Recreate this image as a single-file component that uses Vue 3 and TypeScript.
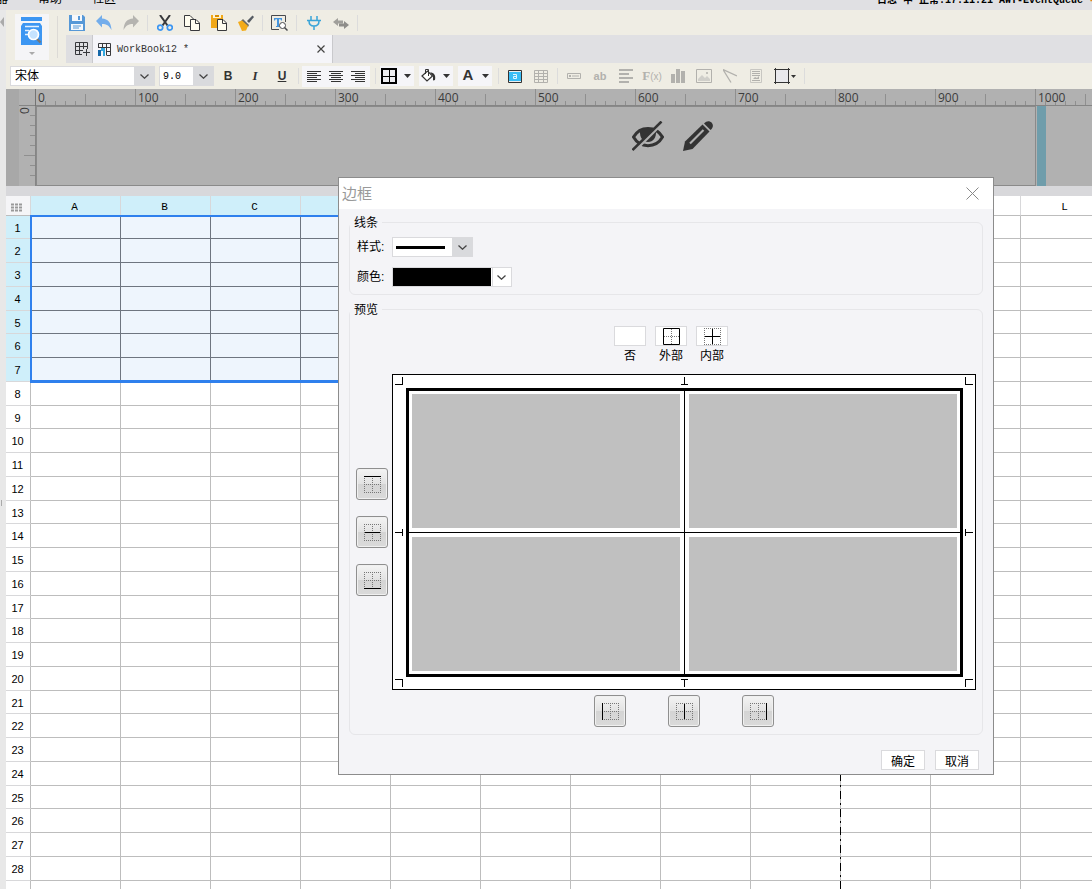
<script setup lang="ts">
const rulerTicks = Array.from({ length: 140 }, (_, i) => ({
  x: 35.5 + i * 10,
  top: i % 10 === 0 ? 0 : i % 5 === 0 ? 5 : 12,
}))
const rulerLabels = Array.from({ length: 14 }, (_, i) => i * 100)
const sideTicks = Array.from({ length: 7 }, (_, i) => ({
  y: 9.5 + i * 10,
  left: i === 4 ? 5 : 11,
}))

const columns = 'ABCDEFGHIJKL'.split('')
const selectedColumns = 8
const selectedRows = 7
const rows = Array.from({ length: 29 }, (_, i) => i + 1)

const presets = [
  { label: '否', kind: 'none' },
  { label: '外部', kind: 'outer' },
  { label: '内部', kind: 'inner' },
]
const dotted = 'M0 .5H17M0 8.5H17M0 16.5H17M.5 0V17M8.5 0V17M16.5 0V17'
const dottedFrame = 'M0 .5H17M0 16.5H17M.5 0V17M16.5 0V17'
const sideEdges = [
  { label: '上边框', solid: 'M0 .5H17' },
  { label: '水平内边框', solid: 'M1 8.5H16' },
  { label: '下边框', solid: 'M0 16.5H17' },
]
const bottomEdges = [
  { label: '左边框', solid: 'M.5 0V17' },
  { label: '垂直内边框', solid: 'M8.5 1V16' },
  { label: '右边框', solid: 'M16.5 0V17' },
]
</script>

<template>
  <div class="app">
    <nav class="menu">
      <div class="menu-items">
        <a href="#" class="m1">服务器</a><a href="#" class="m2">帮助</a><a href="#">社区</a>
      </div>
      <span class="log">日志 中 正常:17:11:21 AWT-EventQueue <i>-</i></span>
    </nav>

    <div class="workspace">
      <aside class="rail">
        <svg class="rail-arrow" width="4" height="10"><path d="M4 0V10L0 5Z" fill="#aaa" /></svg>
        <span class="grip"></span>
      </aside>

      <main class="main">
        <div class="head">
          <div class="mode">
            <button class="big" aria-label="数据预览">
              <svg width="34" height="46" viewBox="0 0 34 46">
                <rect x="6" y="3" width="21" height="4" fill="#3c96f2" />
                <path d="M8 9H25L27 12V31H6V12Z" fill="#3c96f2" />
                <path d="M10 12.500H24M10 16.500H14M10 20.500H13" stroke="#e4f1ff" stroke-width="1.500" />
                <path d="M21 24L25.500 28.500" stroke="#777" stroke-width="2.200" />
                <circle cx="18.500" cy="20.500" r="5" fill="#c5e3ff" stroke="#fff" stroke-width="1.700" />
                <path d="M14 38H20L17 41Z" fill="#aaa" />
              </svg>
            </button>
            <span class="mode-sep"></span>
          </div>
          <div class="head-right">
            <div class="tools">
              <button aria-label="保存"><svg width="16" height="16"><path d="M0 0H14L16 2V16H0Z" fill="#5698d7" /><path d="M3 0H13V6H3ZM2 9H14V15H2Z" fill="#f5f8fb" /><path d="M9 1H11V5H9ZM4 10.500H12V11.500H4ZM4 12.500H10V13.500H4Z" fill="#5698d7" /></svg></button>
              <button aria-label="撤销"><svg width="16" height="16"><path d="M0 6L6 0V3.500C12 4 15 7 15.500 15C13 10.500 10.500 9 6 9V12.500Z" fill="#73adeb" /></svg></button>
              <button aria-label="重做"><svg width="16" height="16"><path d="M16 6L10 0V3.500C4 4 1 7 .5 15C3 10.500 5.500 9 10 9V12.500Z" fill="#b5b4b0" /></svg></button>
              <span class="sep"></span>
              <button aria-label="剪切"><svg width="16" height="16"><path d="M3 0L10.500 10.500M13 0L5.500 10.500" stroke="#38393c" stroke-width="2" /><circle cx="3.200" cy="12.600" r="2.500" fill="none" stroke="#3c96f2" stroke-width="1.700" /><circle cx="12.800" cy="12.600" r="2.500" fill="none" stroke="#3c96f2" stroke-width="1.700" /></svg></button>
              <button aria-label="复制"><svg width="16" height="16"><path d="M.5 .5H6L9.500 4V11.500H.5Z" fill="#fffdf0" stroke="#38393c" /><path d="M6.500 4.500H12L15.500 8V15.500H6.500Z" fill="#fffdf0" stroke="#38393c" /><path d="M11.500 4.500V8.500H15.500" fill="none" stroke="#38393c" /></svg></button>
              <button aria-label="粘贴"><svg width="16" height="16"><path d="M0 0H12V13H0Z" fill="#f0a818" /><path d="M2 0H10V3H2Z" fill="#fff3cf" /><path d="M4 0H8V2H4Z" fill="#d98d00" /><path d="M6.500 4.500H12L15.500 8V15.500H6.500Z" fill="#fffdf0" stroke="#38393c" /><path d="M11.500 4.500V8.500H15.500" fill="none" stroke="#38393c" /></svg></button>
              <button aria-label="格式刷"><svg width="16" height="16"><path d="M9 6L14.500 .5L16 2L11 8Z" fill="#555b62" /><path d="M5 4L11 10L10 12L3 6Z" fill="#6d6b61" /><path d="M0 7L4 5.500L10 11L8 15.500L4 16Z" fill="#f3ab18" /></svg></button>
              <span class="sep"></span>
              <button aria-label="查找"><svg width="17" height="16"><path d="M14.500 7V.5H.5V14.500H8" fill="none" stroke="#48494d" /><path d="M3 3H11V5.500H10L9.500 4.300H8V11H9V12H5V11H6V4.300H4.500L4 5.500H3Z" fill="#4595df" /><circle cx="11.500" cy="10.500" r="3" fill="#fff" stroke="#48494d" /><path d="M13.500 12.500L16.500 15.500" stroke="#48494d" stroke-width="1.500" /></svg></button>
              <span class="sep"></span>
              <button aria-label="连接"><svg width="16" height="16"><path d="M5 1V5M11 1V5M1 5.500H15M3 6C3 9 5 11 8 11S13 9 13 6M8 11V15" fill="none" stroke="#39a4d8" stroke-width="1.500" /></svg></button>
              <button aria-label="切换"><svg width="16" height="14"><path d="M0 6L5 2V4.500H10V7.500H5V10Z" fill="#a09f9b" /><path d="M16 9L11 5V7.500H6V10.500H11V13Z" fill="#8e8d8a" /></svg></button>
              <span class="sep"></span>
            </div>
            <div class="tabs">
              <button class="new-tab" aria-label="新建"><svg width="15" height="14"><path d="M.5 .5H12.500V7M.5 .5V12.500H7M.5 4.500H12.500M.5 8.500H8M4.500 .5V12.500M8.500 .5V7M11.500 7V14M8 10.500H15" fill="none" stroke="#38393c" /></svg></button>
              <div class="tab">
                <svg width="13" height="13"><path d="M.5 5V.5H12.500V12.500H9M.5 4.500H12.500M4.500 .5V5M8.500 .5V12.500M8.500 8.500H12.500" fill="none" stroke="#38393c" /><path d="M0 7H3V13H0Z" fill="#1467a8" /><path d="M3 5H7V13H5V8H3Z" fill="#31a7df" /></svg>
                <span>WorkBook12 *</span>
                <button aria-label="关闭标签"><svg width="8" height="8"><path d="M.5 .5L7.500 7.500M7.500 .5L.5 7.500" stroke="#444" stroke-width="1.200" /></svg></button>
              </div>
            </div>
          </div>
        </div>

        <div class="format">
          <div class="combo font"><select aria-label="字体"><option>宋体</option></select><svg class="chev" width="9" height="5"><path d="M.5 .5L4.500 4.200L8.500 .5" /></svg></div>
          <div class="combo size"><select aria-label="字号"><option>9.0</option></select><svg class="chev" width="9" height="5"><path d="M.5 .5L4.500 4.200L8.500 .5" /></svg></div>
          <div class="biu">
            <button class="b">B</button><button class="i">I</button><button class="u">U</button>
          </div>
          <span class="sep"></span>
          <div class="group">
            <button aria-label="左对齐"><svg width="15" height="11"><path d="M0 .5H14M0 2.500H10M0 4.500H14M0 6.500H10M0 8.500H14M0 10.500H10" stroke="#333" /></svg></button>
            <button aria-label="居中"><svg width="15" height="11"><path d="M0 .5H14M2 2.500H12M0 4.500H14M2 6.500H12M0 8.500H14M2 10.500H12" stroke="#333" /></svg></button>
            <button aria-label="右对齐"><svg width="15" height="11"><path d="M0 .5H14M4 2.500H14M0 4.500H14M4 6.500H14M0 8.500H14M4 10.500H14" stroke="#333" /></svg></button>
          </div>
          <span class="sep wide"></span>
          <div class="drops">
            <button class="drop" aria-label="边框"><svg width="16" height="16"><path d="M1 1H15V15H1Z" fill="#ededf0" stroke="#000" stroke-width="2" /><path d="M8.500 1V15M1 8.500H15" stroke="#000" /></svg><svg width="7" height="4"><path d="M0 0H7L3.500 4Z" fill="#333" /></svg></button>
            <button class="drop" aria-label="填充颜色"><svg width="16" height="16"><path d="M2 8L7.500 3L12.500 8L7 13Z" fill="#fff" stroke="#333" stroke-width="1.200" /><path d="M5.500 6V1.500H8.500V8" fill="none" stroke="#333" /><path d="M10 4.500C14 4.500 16 7 15 12L13 12.500V8Z" fill="#333" /></svg><svg width="7" height="4"><path d="M0 0H7L3.500 4Z" fill="#333" /></svg></button>
            <button class="drop letter" aria-label="字体颜色"><b>A</b><svg width="7" height="4"><path d="M0 0H7L3.500 4Z" fill="#333" /></svg></button>
          </div>
          <span class="sep"></span>
          <div class="cells-tools">
            <button aria-label="单元格"><svg width="14" height="13"><path d="M.5 .5H13.500V12.500H.5Z" fill="#eee" stroke="#333" /><path d="M1 2H13V11H1Z" fill="#39bdf5" /><path d="M5 4.500H8.500V8.500H5.500V6.500H8" fill="none" stroke="#dff5ff" /></svg></button>
            <button aria-label="表格"><svg width="14" height="13"><path d="M.5 .5H13.500V12.500H.5ZM0 3.500H14M0 6.500H14M0 9.500H14M4.500 0V13M9.500 0V13" fill="none" stroke="#b2b1ad" /></svg></button>
          </div>
          <span class="sep"></span>
          <div class="cells-tools">
            <button aria-label="控件"><svg width="14" height="6"><path d="M.5 .5H13.500V5.500H.5ZM5 3H12" fill="none" stroke="#b2b1ad" /><path d="M2 2H4V4H2Z" fill="#b2b1ad" /></svg></button>
            <button class="ab">ab</button>
            <button aria-label="段落"><svg width="14" height="14"><path d="M0 1H14M0 5H10M0 9H14M0 13H10" stroke="#b2b1ad" stroke-width="2" /></svg></button>
            <button class="fx">F<small>(x)</small></button>
            <button aria-label="图表"><svg width="14" height="14"><path d="M0 5H4V14H0ZM5 0H9V14H5ZM10 2H14V14H10Z" fill="#b2b1ad" /></svg></button>
            <button aria-label="图片"><svg width="16" height="14"><path d="M.5 .5H15.500V13.500H.5Z" fill="none" stroke="#b2b1ad" /><path d="M2 12V10L6 6L9 9L11 7L14 10V12Z" fill="#d0cfca" /><circle cx="11" cy="4" r="1" fill="#b2b1ad" /></svg></button>
            <button aria-label="斜线"><svg width="14" height="14"><path d="M0 .5L14 7M0 .5L8 13.500" stroke="#b2b1ad" stroke-width="1.300" /></svg></button>
            <button aria-label="子报表"><svg width="12" height="14"><path d="M.5 .5H11.500V13.500H.5Z" fill="none" stroke="#c8c7c2" /><path d="M2 2.500H10M2 4.500H10M2 6.500H10M2 11.500H10" stroke="#b2b1ad" /><path d="M3 10L5 8L7 9L9 7V10Z" fill="#b2b1ad" /></svg></button>
            <button class="shape" aria-label="悬浮元素"><svg width="22" height="16"><path d="M2 1H14V15H2Z" fill="#e9e9ec" /><path d="M1.500 0V16M14.500 0V16M0 1.500H16M0 14.500H16" stroke="#333" /><path d="M17 7H22L19.500 10Z" fill="#333" /></svg></button>
          </div>
          <span class="sep"></span>
        </div>

        <section class="band">
          <svg class="ruler" width="100%" height="17">
            <g transform="translate(-6 0)">
              <path v-for="t in rulerTicks" :key="t.x" :d="`M${t.x} ${t.top}V16`" stroke="#8f8f8f" />
              <text v-for="n in rulerLabels" :key="n" :x="n + 38" y="13">{{ n }}</text>
              <path d="M19 16.500H2000" stroke="#858585" />
              <path d="M35.500 0V17" stroke="#747474" />
            </g>
          </svg>
          <div class="band-body">
            <svg class="vruler" width="30" height="80">
              <rect width="13" height="80" fill="#a8a8a8" />
              <path v-for="t in sideTicks" :key="t.y" :d="`M${t.left + 13} ${t.y}H30`" stroke="#8f8f8f" />
              <text transform="translate(23 0) rotate(-90)" x="-8" y="0">0</text>
              <path d="M29.500 0V80" stroke="#858585" />
            </svg>
            <div class="canvas">
              <button aria-label="隐藏"><svg width="32" height="30"><path d="M1.500 16C8 4.500 24 4.500 30.500 16C24 27.500 8 27.500 1.500 16Z" fill="none" stroke="#333" stroke-width="3" /><path d="M8 9.500C12 6.500 20 6.500 24 9.500C24.500 17 21 21 16 21S7.500 17 8 9.500Z" fill="#333" /><path d="M-1 29.500L29 -.5" stroke="#b0b0b0" stroke-width="3" transform="translate(2 2)" /><path d="M.5 29L29.500 .5" stroke="#333" stroke-width="2.500" /></svg></button>
              <button aria-label="编辑"><svg width="30" height="30"><path d="M0 30L2 20.500L19.500 3.500L26.500 10.500L9.500 28Z" fill="#333" /><path d="M7 22.500L20.500 9" stroke="#b0b0b0" stroke-width="2.200" /><path d="M21 2.500C24 -1 27 0 28.500 1.500C30 3 31 6 27.500 9Z" fill="#333" /></svg></button>
            </div>
            <div class="margin-bar"></div>
          </div>
        </section>

        <section class="sheet">
          <table>
            <colgroup><col class="c-head" /><col v-for="c in columns" :key="c" /></colgroup>
            <thead>
              <tr>
                <th class="corner"><svg width="11" height="9"><path d="M0 1.500H11M0 4.500H11M0 7.500H11" stroke="#999" stroke-width="2" stroke-dasharray="3 1" /></svg></th>
                <th v-for="(c, i) in columns" :key="c" :class="{ on: i < selectedColumns }">{{ c }}</th>
              </tr>
            </thead>
            <tbody>
              <tr v-for="r in rows" :key="r" :class="{ short: r % 4 === 1 }">
                <th :class="{ on: r <= selectedRows }">{{ r }}</th>
                <td v-for="(c, i) in columns" :key="c" :class="{ sel: r <= selectedRows && i < selectedColumns }"></td>
              </tr>
            </tbody>
          </table>
          <div class="selection"></div>
          <div class="page-break"></div>
        </section>
      </main>
    </div>

    <div class="dialog" role="dialog" aria-labelledby="dlg-title">
      <header>
        <span id="dlg-title">边框</span>
        <button aria-label="关闭"><svg width="13" height="13"><path d="M.5 .5L12.500 12.500M12.500 .5L.5 12.500" stroke="#888" /></svg></button>
      </header>
      <div class="body">
        <fieldset class="line">
          <legend>线条</legend>
          <div class="field">
            <label for="line-style">样式:</label>
            <div class="combo stroke"><select id="line-style"><option></option></select><svg class="chev" width="9" height="5"><path d="M.5 .5L4.500 4.200L8.500 .5" /></svg></div>
          </div>
          <div class="field">
            <label for="line-color">颜色:</label>
            <div class="combo color"><select id="line-color"><option></option></select><svg class="chev" width="9" height="5"><path d="M.5 .5L4.500 4.200L8.500 .5" /></svg></div>
          </div>
        </fieldset>

        <fieldset class="preview">
          <legend>预览</legend>
          <div class="presets">
            <div v-for="p in presets" :key="p.kind" class="preset">
              <button :id="`preset-${p.kind}`">
                <svg v-if="p.kind !== 'none'" width="17" height="17">
                  <template v-if="p.kind === 'outer'">
                    <path d="M1 8.500H16M8.500 1V16" stroke="#777" stroke-dasharray="1 1" /><path d="M.5 .5H16.500V16.500H.5Z" fill="none" stroke="#000" />
                  </template>
                  <template v-else>
                    <path :d="dottedFrame" fill="none" stroke="#777" stroke-dasharray="1 1" /><path d="M1 8.500H16M8.500 1V16" stroke="#000" />
                  </template>
                </svg>
              </button>
              <label :for="`preset-${p.kind}`">{{ p.label }}</label>
            </div>
          </div>
          <div class="stage">
            <div class="edges side">
              <button v-for="e in sideEdges" :key="e.label" class="edge" :aria-label="e.label">
                <svg width="17" height="17"><path :d="dotted" fill="none" stroke="#777" stroke-dasharray="1 1" /><path :d="e.solid" stroke="#000" /></svg>
              </button>
            </div>
            <svg class="sample" viewBox="0 0 584 316" shape-rendering="crispEdges">
              <rect x=".5" y=".5" width="583" height="315" fill="#fff" stroke="#000" />
              <path d="M20 20H288V154H20ZM297 20H565V154H297ZM20 163H288V297H20ZM297 163H565V297H297Z" fill="#c0c0c0" />
              <rect x="15.500" y="15.500" width="554" height="286" fill="none" stroke="#000" stroke-width="3" />
              <path d="M292.500 17V300M17 158.500H568" stroke="#000" />
              <path d="M3 10.500H11M10.500 3V11M289 10.500H296M292.500 3V11M573 10.500H581M573.500 3V11M3 158.500H11M10.500 155V162M573 158.500H581M573.500 155V162M3 305.500H11M10.500 305V313M289 305.500H296M292.500 305V313M573 305.500H581M573.500 305V313" fill="none" stroke="#000" />
            </svg>
            <div class="edges bottom">
              <button v-for="e in bottomEdges" :key="e.label" class="edge" :aria-label="e.label">
                <svg width="17" height="17"><path :d="dotted" fill="none" stroke="#777" stroke-dasharray="1 1" /><path :d="e.solid" stroke="#000" /></svg>
              </button>
            </div>
          </div>
        </fieldset>
        <footer><button>确定</button><button>取消</button></footer>
      </div>
    </div>
  </div>
</template>

<style>
body { margin: 0; overflow: hidden; }
</style>

<style scoped>
* { box-sizing: border-box; }
.app {
  position: relative; height: 100vh; overflow: hidden; display: flex; flex-direction: column;
  background: #fff; color: #000;
  font: 12px "Liberation Sans", "Noto Sans CJK SC", sans-serif;
}
button { padding: 0; border: 0; background: none; color: inherit; font: inherit; display: flex; align-items: center; justify-content: center; }
svg { display: block; flex: none; }
select { appearance: none; border: 0; border-radius: 0; background: #fff; font: inherit; color: #000; padding: 0 4px; margin: 0; outline: 0; }

.menu { flex: none; height: 10px; overflow: hidden; display: flex; align-items: flex-end; justify-content: space-between; background: #e0e0e3; line-height: 16px; padding-bottom: 3px; }
.menu a { color: #000; text-decoration: none; }
.menu-items { display: flex; gap: 30px; margin-left: -28px; }
.log { font: 10px/12px "Liberation Mono", "Noto Sans CJK SC", monospace; white-space: pre; font-weight: bold; margin-right: -3px; }
.log i { color: #e08020; font-style: normal; }

.workspace { flex: 1; display: flex; min-height: 0; }
.rail { flex: none; width: 6px; background: #e8e8e8; display: flex; flex-direction: column; justify-content: space-between; }
.rail-arrow { margin-top: 7px; }
.grip { width: 1px; height: 6px; margin: 0 0 383px 1px; background: #aaa; }
.main { flex: 1; min-width: 0; display: flex; flex-direction: column; }

.head { flex: none; display: flex; background: #efede4; }
.mode { display: flex; width: 60px; padding: 4px 0 3px 9px; gap: 8px; }
.big { background: #f5f5f7; width: 34px; height: 46px; }
.mode-sep { width: 1px; height: 42px; margin-top: 2px; background: #dcdad6; }
.head-right { flex: 1; min-width: 0; }
.tools { display: flex; align-items: center; height: 25px; margin-left: -3px; }
.tools button { width: 27px; height: 24px; }
.sep { flex: none; width: 7px; height: 16px; display: flex; justify-content: center; }
.sep::before { content: ""; width: 1px; height: 100%; background: #dcdcdc; }
.tabs { display: flex; height: 28px; background: #e0e0e3; }
.new-tab { width: 27px; padding-left: 6px; border-right: 1px solid #c9c9cc; background: #dedee1; }
.tab { display: flex; align-items: center; width: 240px; padding: 0 7px 0 5px; background: #f5f5f9; border-right: 1px solid #c9c9cc; color: #333; }
.tab span { flex: 1; margin-left: 6px; font: 10px "Liberation Mono", monospace; white-space: pre; }

.format { flex: none; display: flex; align-items: center; height: 26px; background: #efede4; padding-left: 4px; }
.combo { position: relative; display: flex; height: 20px; border: 1px solid #dadadd; background: #dadadd; }
.combo select { flex: 1; width: 100%; height: 18px; border-right: 20px solid #d9dadd; }
.chev { position: absolute; right: 5px; top: 7px; fill: none; stroke: #444; stroke-width: 1.3; pointer-events: none; }
.font { width: 145px; }
.size { width: 55px; margin-left: 4px; }
.size select { font: 10px "Liberation Mono", monospace; padding-left: 3px; }
.biu { display: flex; gap: 1px; margin-left: 1px; }
.biu button { width: 26px; height: 20px; font-size: 12px; color: #333; font-weight: bold; }
.biu .i { font-family: "Liberation Serif", serif; font-style: italic; font-size: 13px; }
.biu .u { text-decoration: underline; }
.group { display: flex; height: 21px; background: #f5f5f8; padding: 0 1px; }
.group button { width: 22px; padding-top: 1px; }
.sep.wide { width: 10px; }
.drops { display: flex; gap: 5px; margin-right: 3px; }
.drop { width: 34px; height: 20px; gap: 7px; justify-content: flex-start; background: #f5f5f8; padding-left: 1px; }
.drop b { width: 16px; color: #333; font-size: 15px; line-height: 16px; padding: 0 0 3px 2px; }
.cells-tools { display: flex; }
.cells-tools button { width: 26px; height: 20px; color: #b2b1ad; }
.cells-tools .ab { font-weight: bold; font-size: 11px; }
.cells-tools .fx { font: bold 13px "Liberation Serif", serif; }
.fx small { font: 10px "Liberation Sans", sans-serif; }
.cells-tools .shape { width: 32px; }

.band { flex: none; background: #b1b1b1; border-bottom: 10px solid #d8d8db; }
.ruler { background: linear-gradient(90deg, #a8a8a8 13px, #b1b1b1 13px); }
.ruler text, .vruler text { font: 12px "Open Sans", sans-serif; fill: #3c3c3c; }
.band-body { display: flex; }
.canvas { flex: 0 1 1000px; height: 80px; display: flex; align-items: flex-start; gap: 19px; border: 1px solid #8a8a8a; padding: 14px 0 0 595px; }
.margin-bar { width: 9px; margin-left: 1px; background: #6f9dab; }

.sheet { position: relative; flex: 1; overflow: hidden; min-height: 0; background: #fff; }
table { table-layout: fixed; width: 1105px; border-collapse: separate; border-spacing: 0; }
col { width: 90px; }
.c-head { width: 25px; }
th { padding: 0; font: 11px "Liberation Mono", monospace; border: 0 solid #d8d8da; border-right-width: 1px; border-bottom: 1px solid #bdbdbd; text-align: center; vertical-align: middle; }
thead tr { height: 20px; }
thead th { padding: 3px 2px 0 0; }
thead th.on { border-bottom-color: #cfeffa; }
tbody th { font: 11px "Liberation Sans", sans-serif; border-bottom-color: #d8d8da; border-right-color: #bdbdbd; padding: 1px 1px 0 0; }
th.on { background: #cfeffa; }
.corner { background: #f5f5f7; }
.corner svg { margin: 0 auto 0 5px; }
tbody tr { height: 24px; }
tbody tr.short { height: 23px; }
td { padding: 0; border: 0 solid #bdbdbd; border-right-width: 1px; border-bottom-width: 1px; }
td.sel { background: #eef5fd; border-color: #6e7580; }
.selection { position: absolute; left: 24px; top: 19px; width: 722px; height: 168px; border: 2px solid #2f80ed; border-bottom-width: 3px; }
.page-break { position: absolute; left: 834px; top: 20px; bottom: 0; width: 1px; background: repeating-linear-gradient(#000 0 8px, #bdbdbd 8px 12px, #000 12px 14px, #bdbdbd 14px 18px); background-position-y: -1px; }

.dialog { position: absolute; left: 338px; top: 177px; width: 656px; border: 1px solid #8c8c8c; background: #f4f4f7; }
header { display: flex; justify-content: space-between; align-items: center; height: 31px; padding: 0 14px 0 3px; background: #fff; color: #999; font-size: 15px; line-height: 20px; }
.body { padding: 1px 10px 4px; }
fieldset { min-width: 0; margin: 0; padding: 0 6px 7px; border: 1px solid #e6e6e9; border-radius: 6px; }
legend { padding: 1px 4px 0; height: 24px; line-height: 24px; margin-left: -6px; }
.line { display: flex; flex-direction: column; }
.field { display: flex; align-items: center; margin-top: 3px; }
.field + .field { margin-top: 10px; }
.field label { width: 36px; padding-left: 1px; line-height: 20px; }
.stroke { width: 81px; }
.stroke select { background: linear-gradient(#000, #000) 3px 8px / 49px 3px no-repeat #fff; }
.color { width: 120px; background: #fff; }
.color select { background: #000; border-right-color: #fff; background-clip: padding-box; }
.color::after { content: ""; position: absolute; right: 18px; top: 0; width: 1px; height: 18px; background: #dadadd; }
.preview { margin-top: 2px; }
.presets { display: flex; justify-content: center; gap: 9px; padding: 5px 0 8px 10px; }
.preset { width: 32px; }
.preset button { width: 32px; height: 20px; background: #fff; border: 1px solid #dadadd; }
.preset label { display: block; height: 20px; line-height: 20px; text-align: center; }
.stage { display: grid; grid-template-columns: 32px 1fr; column-gap: 4px; row-gap: 5px; align-items: center; }
.sample { width: 100%; }
.edges { display: flex; }
.side { flex-direction: column; gap: 16px; }
.bottom { grid-column: 2; justify-content: center; gap: 42px; }
.edge { width: 32px; height: 32px; border: 1px solid #8f8f8f; border-radius: 3px; background: linear-gradient(#f4f4f4, #e2e2e2 50%, #d4d4d4 50%, #dadada); box-shadow: inset 0 0 0 1px #f0f0f0; padding: 1px 0 0 1px; }
footer { display: flex; justify-content: flex-end; gap: 10px; padding: 15px 4px 0 0; }
footer button { width: 44px; height: 20px; border: 1px solid #dadadd; background: #fff; }
</style>
